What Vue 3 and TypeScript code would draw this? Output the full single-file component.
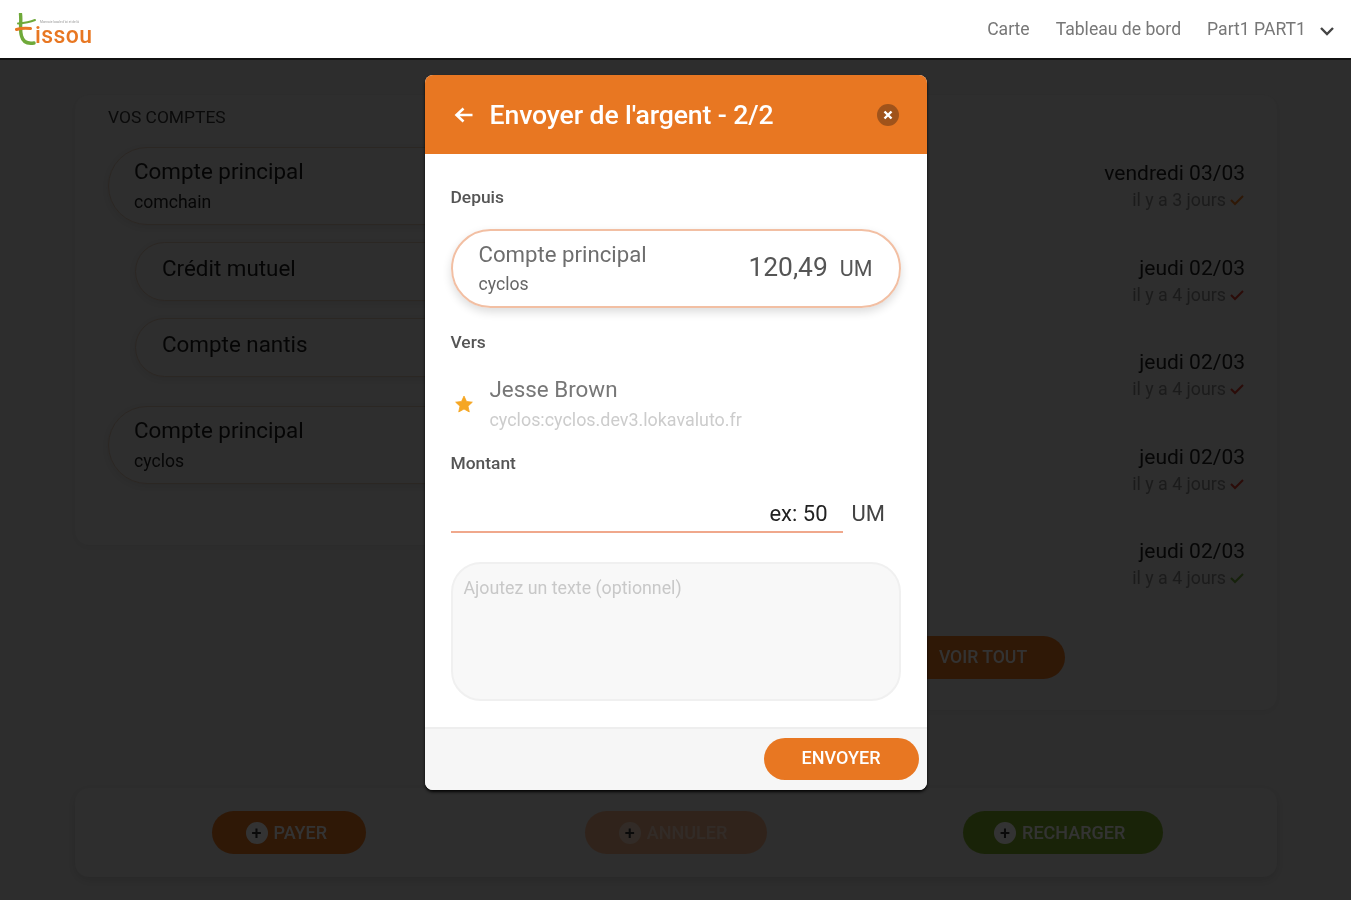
<script setup lang="ts">
interface Account { name: string; sub?: string; nested?: boolean; gap?: boolean }
interface Tx { date: string; ago: string; tone: string }

const accounts: Account[] = [
  { name: 'Compte principal', sub: 'comchain' },
  { name: 'Crédit mutuel', nested: true },
  { name: 'Compte nantis', nested: true },
  { name: 'Compte principal', sub: 'cyclos', gap: true },
]
const transactions: Tx[] = [
  { date: 'vendredi 03/03', ago: 'il y a 3 jours', tone: 'orange' },
  { date: 'jeudi 02/03', ago: 'il y a 4 jours', tone: 'red' },
  { date: 'jeudi 02/03', ago: 'il y a 4 jours', tone: 'red' },
  { date: 'jeudi 02/03', ago: 'il y a 4 jours', tone: 'red' },
  { date: 'jeudi 02/03', ago: 'il y a 4 jours', tone: 'green' },
]
const actions = [
  { label: 'PAYER', kind: 'pay' },
  { label: 'ANNULER', kind: 'cancel' },
  { label: 'RECHARGER', kind: 'topup' },
]
</script>

<template>
  <div class="app">
    <header class="nav">
      <div class="logo">
        <svg class="logo-t" width="26" height="32" viewBox="0 0 26 32" aria-hidden="true">
          <path d="M5.5 1 C6.5 8 4.5 17 6.5 23 C8 29 13 31 19 30" fill="none" stroke="#6fa93a" stroke-width="3.4" stroke-linecap="round" />
          <path d="M3 10.5 C9 10 15 9 20 7" fill="none" stroke="#6fa93a" stroke-width="2" stroke-linecap="round" />
          <path d="M1.5 16.5 C6 15 11 15 15.5 15.5" fill="none" stroke="#e87722" stroke-width="3" stroke-linecap="round" />
        </svg>
        <div class="logo-words">
          <span class="logo-tag">Monnaie locale d'ici et de là</span>
          <span class="logo-name">issou</span>
        </div>
      </div>
      <nav class="links">
        <a>Carte</a>
        <a>Tableau de bord</a>
        <a class="user">Part1 PART1
          <svg width="16" height="10" viewBox="0 0 16 10" aria-hidden="true">
            <path d="M2 2 L8 8 L14 2" fill="none" stroke="#444" stroke-width="2.4" />
          </svg>
        </a>
      </nav>
    </header>

    <main class="page">
      <div class="columns">
        <section class="panel accounts">
          <h2>VOS COMPTES</h2>
          <div
            v-for="(a, i) in accounts"
            :key="i"
            class="account"
            :class="{ nested: a.nested, spaced: a.gap }"
          >
            <div class="acc-name">{{ a.name }}</div>
            <div v-if="a.sub" class="acc-sub">{{ a.sub }}</div>
          </div>
        </section>
        <section class="panel history">
          <div v-for="(t, i) in transactions" :key="i" class="tx">
            <div class="tx-date">{{ t.date }}</div>
            <div class="tx-ago">
              {{ t.ago }}
              <svg width="16" height="12" viewBox="0 0 16 12" aria-hidden="true">
                <path d="M2 6 L6 10 L14 2" fill="none" :class="t.tone" stroke-width="2" />
              </svg>
            </div>
          </div>
          <div class="more"><button class="btn-all">VOIR TOUT</button></div>
        </section>
      </div>
      <section class="panel actions">
        <div v-for="x in actions" :key="x.kind" class="action-cell">
          <button class="action" :class="x.kind">
            <span class="plus">+</span>{{ x.label }}
          </button>
        </div>
      </section>
    </main>

    <div class="overlay">
      <div class="modal">
        <div class="m-head">
          <svg width="22" height="20" viewBox="0 0 22 20" aria-hidden="true">
            <path d="M10.5 3.5 L3.5 10 L10.5 16.5 M4 10 H19.5" fill="none" stroke="#fff" stroke-width="2.6" />
          </svg>
          <h1>Envoyer de l'argent - 2/2</h1>
          <span class="close">
            <svg width="10" height="10" viewBox="0 0 10 10" aria-hidden="true">
              <path d="M1.5 1.5 L8.5 8.5 M8.5 1.5 L1.5 8.5" stroke="#fff" stroke-width="2.4" />
            </svg>
          </span>
        </div>

        <div class="m-body">
          <div class="label first">Depuis</div>
          <div class="from">
            <div>
              <div class="from-name">Compte principal</div>
              <div class="from-sub">cyclos</div>
            </div>
            <div class="from-amount">120,49<span>UM</span></div>
          </div>

          <div class="label to-label">Vers</div>
          <div class="to">
            <svg width="20" height="20" viewBox="0 0 24 24" aria-hidden="true">
              <path d="M12 2.5 L15 9 L22 9.8 L16.8 14.6 L18.3 21.5 L12 18 L5.7 21.5 L7.2 14.6 L2 9.8 L9 9 Z" fill="#f5a623" stroke="#f5a623" stroke-linejoin="round" />
            </svg>
            <div>
              <div class="to-name">Jesse Brown</div>
              <div class="to-addr">cyclos:cyclos.dev3.lokavaluto.fr</div>
            </div>
          </div>

          <div class="label amount-label">Montant</div>
          <div class="amount">
            <input class="amount-input" placeholder="ex: 50" />
            <span class="unit">UM</span>
          </div>

          <textarea class="note" placeholder="Ajoutez un texte (optionnel)"></textarea>
        </div>

        <div class="m-foot">
          <button class="send">ENVOYER</button>
        </div>
      </div>
    </div>
  </div>
</template>

<style>
html, body { margin: 0; overflow: hidden; }
</style>

<style scoped>
.app {
  position: relative;
  height: 900px;
  overflow: hidden;
  background: #e2e2e2;
  font-family: Roboto, "Liberation Sans", sans-serif;
  filter: blur(0.7px);
}
.nav {
  height: 58px;
  background: #fff;
  border-bottom: 2px solid #111;
  display: flex;
  align-items: center;
  justify-content: space-between;
  padding: 0 16px 0 15px;
}
.logo { display: flex; align-items: flex-end; height: 32px; }
.logo-t { margin-right: -6px; }
.logo-words { display: flex; flex-direction: column; margin-bottom: 1px; }
.logo-tag { font-size: 3.2px; color: #999; line-height: 4px; white-space: nowrap; margin: 0 0 4px 5px; }
.logo-name { font-size: 23px; line-height: 16px; font-weight: 500; color: #e87722; letter-spacing: 0.4px; }
.links { display: flex; align-items: center; gap: 26px; font-size: 17.6px; color: #777; margin-top: -1px; }
.user { display: flex; align-items: center; gap: 13px; }
.user svg { margin-top: 4px; }

.page { padding: 35px 74px 0 75px; }
.columns { display: grid; grid-template-columns: 600px 1fr; gap: 14px; align-items: start; }
.panel { background: #e3e3e3; border-radius: 14px; box-shadow: 0 2px 10px rgba(0, 0, 0, 0.08); }
.accounts { height: 450px; padding: 12px 33px 0; box-sizing: border-box; }
h2 { margin: 0 0 20px; font-size: 17.4px; line-height: 20px; font-weight: 400; color: #333; }
.account {
  height: 78px;
  box-sizing: border-box;
  padding: 10px 25px 0;
  border: 1px solid #d8c0ae;
  border-radius: 39px;
  box-shadow: 0 2px 6px rgba(0, 0, 0, 0.08);
}
.account.nested { height: 59px; margin: 17px 0 0 27px; padding: 12px 26px 0; border-radius: 30px; }
.account.spaced { margin-top: 29px; }
.acc-name { font-size: 22.4px; line-height: 26px; color: #1c1c1c; }
.acc-sub { font-size: 17.6px; line-height: 22px; margin-top: 7px; color: #222; }

.history { height: 615px; padding: 64px 32px 0 0; box-sizing: border-box; }
.tx { height: 94.5px; text-align: right; }
.tx-date { font-size: 21px; line-height: 28px; color: #222; }
.tx-ago { font-size: 17.8px; line-height: 26px; color: #888; display: flex; justify-content: flex-end; align-items: center; gap: 3px; }
.orange { stroke: #e87722; }
.red { stroke: #d63a2a; }
.green { stroke: #6fa93a; }
.more { display: flex; justify-content: center; margin: 4px -32px 0 0; }
.btn-all {
  width: 164px;
  height: 43px;
  border: 0;
  border-radius: 22px;
  background: #e87722;
  color: #fff;
  font: 500 17.6px Roboto, sans-serif;
}
.actions {
  margin-top: 78px;
  height: 89px;
  display: grid;
  grid-template-columns: repeat(3, 1fr);
  padding: 0 21px;
  align-items: center;
  box-shadow: 0 3px 12px rgba(0, 0, 0, 0.14);
}
.action-cell { display: flex; justify-content: center; }
.action {
  height: 43px;
  border: 0;
  border-radius: 22px;
  color: #fff;
  font: 500 18px Roboto, sans-serif;
  display: flex;
  align-items: center;
  justify-content: center;
  gap: 6px;
  padding: 0 6px 0 0;
}
.plus {
  width: 22px;
  height: 22px;
  border-radius: 50%;
  background: #fff;
  color: #333;
  font-size: 18px;
  line-height: 22px;
}
.pay { width: 154px; background: #e87722; }
.cancel { width: 182px; background: #f0b088; color: #f7d8c4; }
.cancel .plus { background: #f7d8c4; }
.topup { width: 200px; background: #7fb02c; }

.overlay {
  position: absolute;
  inset: 60px 0 0;
  background: rgba(0, 0, 0, 0.8);
  display: flex;
  justify-content: center;
  align-items: flex-start;
  padding-top: 15px;
}
.modal {
  width: 502px;
  height: 715px;
  border-radius: 8px;
  background: #fff;
  overflow: hidden;
  display: flex;
  flex-direction: column;
  box-shadow: 0 2px 3px rgba(0, 0, 0, 0.9);
}
.m-head {
  flex: 0 0 79px;
  background: #e87722;
  display: flex;
  align-items: center;
  padding: 0 28px;
  color: #fff;
}
.m-head h1 { flex: 1; margin: 0 0 0 15px; font-size: 26.6px; font-weight: 500; letter-spacing: -0.1px; white-space: nowrap; }
.close {
  width: 22px;
  height: 22px;
  border-radius: 50%;
  background: rgba(70, 40, 20, 0.45);
  display: flex;
  align-items: center;
  justify-content: center;
}
.m-body { flex: 1; padding: 0 26px; }
.label { font-size: 17.4px; line-height: 20px; color: #555; font-weight: 500; }
.first { margin-top: 33px; }
.from {
  margin-top: 22px;
  height: 79px;
  box-sizing: border-box;
  border: 2px solid #f2bfa3;
  border-radius: 40px;
  padding: 0 26px;
  display: flex;
  align-items: center;
  justify-content: space-between;
  box-shadow: 0 4px 10px rgba(0, 0, 0, 0.14);
}
.from-name { font-size: 22.2px; line-height: 26px; color: #6e6e6e; margin-top: -1px; }
.from-sub { font-size: 17.6px; line-height: 22px; margin-top: 6px; color: #666; }
.from-amount { font-size: 26.4px; color: #555; display: flex; align-items: baseline; margin-top: -3px; }
.from-amount span { font-size: 21.5px; margin-left: 12px; }
.to-label { margin-top: 24px; }
.to { display: flex; align-items: center; gap: 16px; margin-top: 24px; padding-left: 3px; }
.to-name { font-size: 22.4px; line-height: 26px; color: #777; }
.to-addr { font-size: 17.9px; line-height: 22px; margin-top: 7px; color: #ccc; }
.amount-label { margin-top: 22px; }
.amount { display: flex; align-items: center; margin-top: 16px; }
.amount-input {
  width: 392px;
  height: 44px;
  box-sizing: border-box;
  border: 0;
  border-bottom: 2px solid #f0a88c;
  outline: 0;
  padding: 6px 15px 0 0;
  font: 400 22px Roboto, sans-serif;
  text-align: right;
  background: transparent;
}
.amount-input::placeholder { color: #222; opacity: 1; }
.unit { font-size: 22px; color: #444; margin: 4px 0 0 9px; }
.note {
  display: block;
  width: 100%;
  height: 139px;
  margin-top: 29px;
  box-sizing: border-box;
  border: 2px solid #f0f0f0;
  border-radius: 30px;
  background: #f8f8f8;
  padding: 13px 11px;
  resize: none;
  outline: 0;
  font: 400 17.8px/22px Roboto, sans-serif;
}
.note::placeholder { color: #c8c8c8; opacity: 1; }
.m-foot {
  flex: 0 0 63px;
  box-sizing: border-box;
  background: #f6f6f6;
  border-top: 2px solid #eee;
  display: flex;
  justify-content: flex-end;
  padding: 9px 8px 0 0;
}
.send {
  width: 155px;
  height: 42px;
  border: 0;
  border-radius: 21px;
  background: #e87722;
  color: #fff;
  font: 500 18px Roboto, sans-serif;
  padding: 0 0 3px;
}
</style>
